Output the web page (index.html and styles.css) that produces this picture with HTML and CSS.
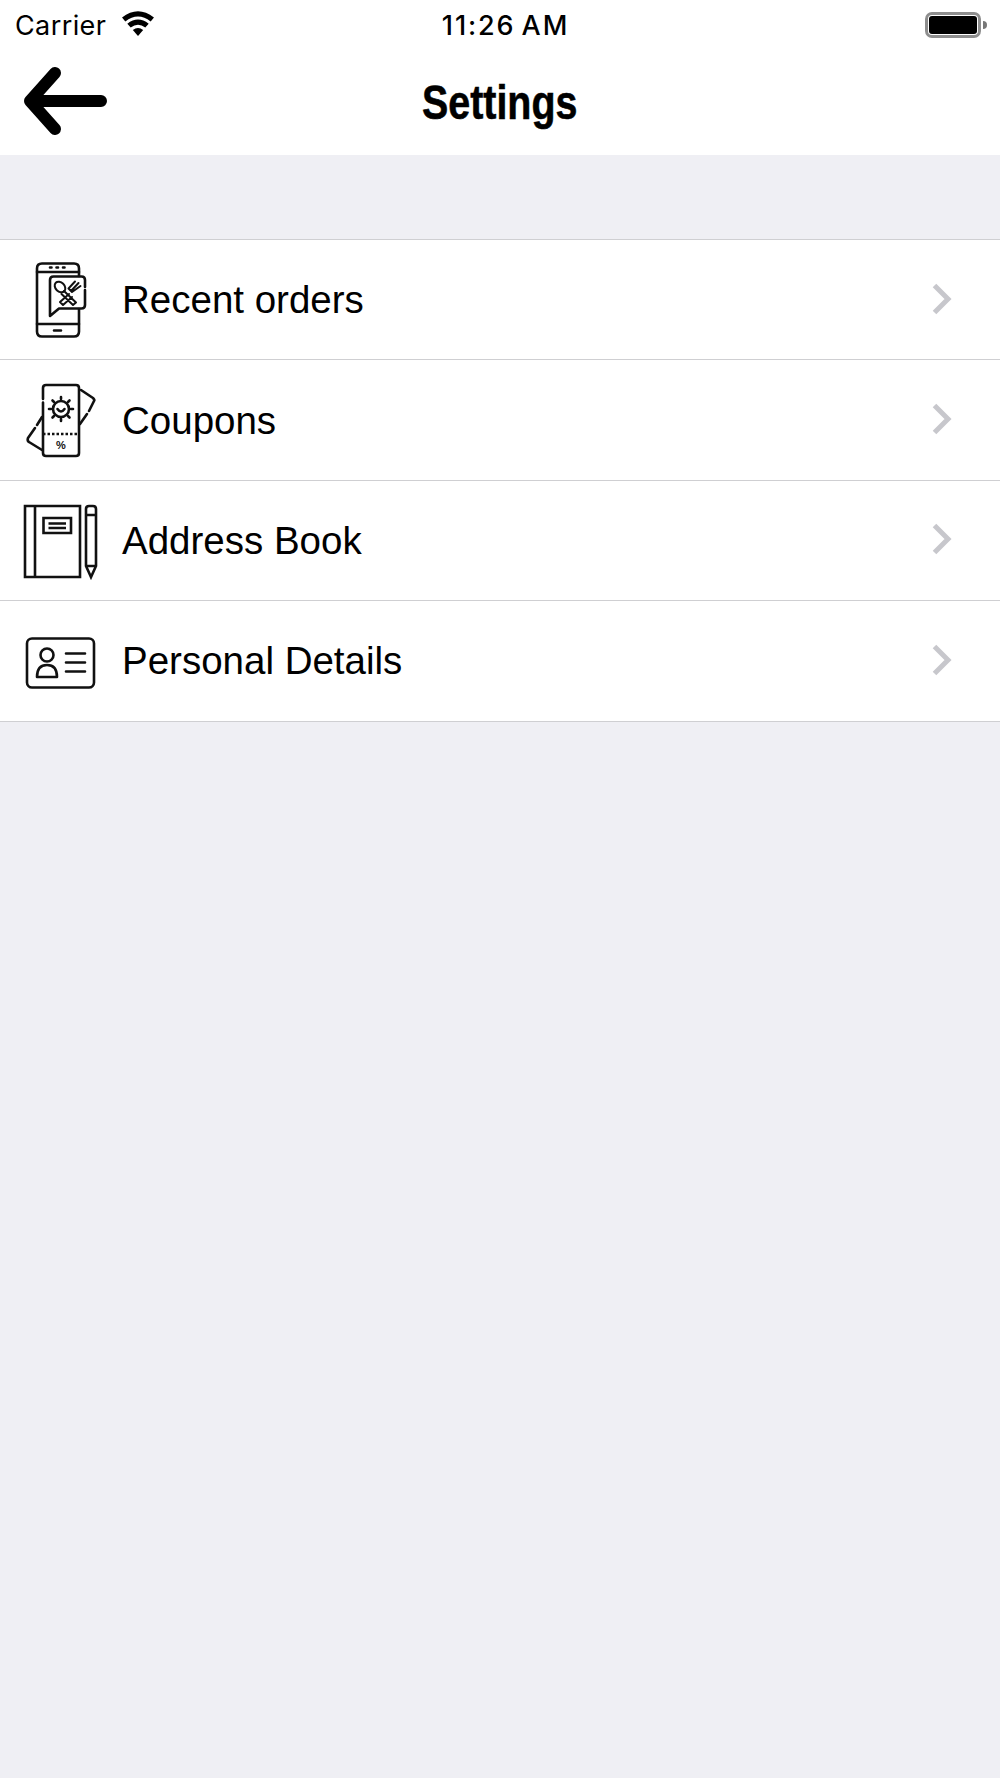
FILE: index.html
```html
<html>

<head>
	<title>Settings</title>
	<link rel="stylesheet" href="styles.css">
</head>

<body>
	<div class="status-bar">
		<div class="status-left">
			<span class="carrier">Carrier</span>
			<svg class="wifi" viewBox="0 0 34 26">
				<path d="M17 26 L11.6 19.8 Q17 15.6 22.4 19.8 Z" />
				<path d="M9.4 17.2 L5.9 13.2 Q17 4.6 28.1 13.2 L24.6 17.2 Q17 11.4 9.4 17.2 Z" />
				<path d="M3.8 10.8 L0.4 6.8 Q17 -6.4 33.6 6.8 L30.2 10.8 Q17 0.6 3.8 10.8 Z" />
			</svg>
		</div>
		<span class="time">11:26 AM</span>
		<div class="status-right">
			<div class="battery">
				<div class="battery-level"></div>
			</div>
			<div class="battery-cap"></div>
		</div>
	</div>

	<div class="nav-bar">
		<svg class="back" viewBox="0 0 84 68">
			<path d="M31 6 L6 34 L31 62 M6 34 L77 34" />
		</svg>
		<h1 class="title">Settings</h1>
	</div>

	<div class="menu">
		<div class="row">
			<svg class="row-icon" viewBox="0 0 100 100">
				<path d="M40 13.5 H32 Q27 13.5 27 18.5 V81.5 Q27 86.5 32 86.5 H64 Q69 86.5 69 81.5 V59 M69 26 V18.5 Q69 13.5 64 13.5 H40" />
				<path d="M27 22 H69 M27 74 H69 M44 80.5 H51" />
				<path d="M40 17.5 H41.5 M46.5 17.5 H48 M53 17.5 H54.5" />
				<path d="M75 37 V30 Q75 26.5 71.5 26.5 H43.5 Q40 26.5 40 30 V66 L49 58.5 H71.5 Q75 58.5 75 55 V40" />
				<g class="cutlery">
					<ellipse cx="50" cy="37" rx="4.5" ry="6" transform="rotate(-45 50 37)" />
					<path d="M54 41 L66 52.5 L63 55 L51.5 44 M68.5 33 L61 41 M65 31.5 L58.5 38.5 L62 42 L70.5 36 M59 44 L50 52 L53 55 L62 47" />
				</g>
			</svg>
			<span class="row-label">Recent orders</span>
			<svg class="chevron" viewBox="0 0 20 32"><path d="M2.5 2.5 L16 16 L2.5 29.5" /></svg>
		</div>
		<div class="row">
			<svg class="row-icon" viewBox="0 0 100 100">
				<path d="M33 29 V18 Q33 15 36 15 H66 Q69 15 69 18 V83 Q69 86 66 86 H36 Q33 86 33 83 V32.5" />
				<path class="dash" d="M33 64 H69" />
				<path d="M71 20 L83 28 Q85 30 84 31 L79 41 M77 44 L70 54 M32 47 L27 55 M25 58 L18 68 Q17 71 19 72 L32 80" />
				<circle cx="51" cy="39" r="8" />
				<path d="M47.5 39 Q51 44 54.5 39 M51 27 V29 M51 49 V51 M39 39 H41 M61 39 H63 M42.5 30.5 L44 32 M58 46 L59.5 47.5 M42.5 47.5 L44 46 M58 32 L59.5 30.5" />
				<text class="percent" x="51" y="79">%</text>
			</svg>
			<span class="row-label">Coupons</span>
			<svg class="chevron" viewBox="0 0 20 32"><path d="M2.5 2.5 L16 16 L2.5 29.5" /></svg>
		</div>
		<div class="row">
			<svg class="row-icon" viewBox="0 0 100 100">
				<path class="square" d="M15 16 H70 V87 H15 Z M25 16 V87 M33.5 28 H61 V43 H33.5 Z M38.5 33.5 H56 M38.5 38 H56" />
				<path class="square" d="M76 76 V19 Q76 16 79 16 H83 Q86 16 86 19 V76 L81 87 Z M76 25 H86 M76 76 H86" />
			</svg>
			<span class="row-label">Address Book</span>
			<svg class="chevron" viewBox="0 0 20 32"><path d="M2.5 2.5 L16 16 L2.5 29.5" /></svg>
		</div>
		<div class="row">
			<svg class="row-icon" viewBox="0 0 100 100">
				<rect x="17" y="27.5" width="67" height="49" rx="5" />
				<circle cx="37" cy="44" r="6.5" />
				<path d="M27 66 Q27 54 37 54 Q47 54 47 66 Z" />
				<path d="M56 42.5 H75 M56 51.5 H75 M56 60.5 H75" />
			</svg>
			<span class="row-label">Personal Details</span>
			<svg class="chevron" viewBox="0 0 20 32"><path d="M2.5 2.5 L16 16 L2.5 29.5" /></svg>
		</div>
	</div>
</body>

</html>
```

FILE: styles.css
```css
* {
	box-sizing: border-box;
	margin: 0;
	padding: 0;
}

html,
body {
	height: 100%;
}

body {
	background: #efeff4;
	font-family: "Liberation Sans", Arial, sans-serif;
	color: #000;
}

.status-bar {
	height: 50px;
	background: white;
	display: grid;
	grid-template-columns: 1fr auto 1fr;
	align-items: center;
	padding: 0 13px 0 15px;
	font-family: Inter, "Liberation Sans", sans-serif;
	font-size: 26px;
}

.status-left {
	display: flex;
	align-items: center;
	gap: 14px;
}

.carrier {
	font-size: 27px;
	letter-spacing: 0.4px;
}

.wifi {
	width: 36px;
	height: 25px;
	margin-top: -3px;
}

.time {
	font-weight: 500;
	font-size: 27px;
	letter-spacing: 1.9px;
	word-spacing: -3px;
	padding-left: 9px;
}

.status-right {
	display: flex;
	align-items: center;
	justify-content: flex-end;
	gap: 2px;
}

.battery {
	width: 56px;
	height: 26px;
	border: 3px solid #8e8e8e;
	border-radius: 7px;
	padding: 1px;
}

.battery-level {
	height: 100%;
	background: black;
	border-radius: 3px;
}

.battery-cap {
	width: 4px;
	height: 8px;
	background: #777;
	border-radius: 0 4px 4px 0;
}

.nav-bar {
	height: 105px;
	background: white;
	display: flex;
	align-items: center;
	justify-content: center;
	position: relative;
}

.back {
	position: absolute;
	left: 24px;
	top: 17px;
	width: 84px;
	height: 68px;
	fill: none;
	stroke: black;
	stroke-width: 12;
	stroke-linecap: round;
	stroke-linejoin: round;
}

.title {
	font-size: 48px;
	font-weight: bold;
	-webkit-text-stroke: 0.6px black;
	transform: scaleX(0.82);
}

.menu {
	margin-top: 84px;
	border-top: 1px solid #cfcfd2;
	background: white;
}

.row {
	height: 120.4px;
	display: flex;
	align-items: center;
	padding: 0 48px 0 10px;
	gap: 12px;
	border-bottom: 1px solid #cfcfd2;
}

.row-icon {
	width: 100px;
	height: 100px;
	fill: none;
	stroke: #111;
	stroke-width: 2.6;
	stroke-linecap: round;
	stroke-linejoin: round;
}

.row-icon .cutlery {
	stroke-width: 2;
}

.row-icon .square {
	stroke-linecap: butt;
	stroke-linejoin: miter;
}

.row-icon .dash {
	stroke-dasharray: 2.5 2;
	stroke-linecap: butt;
}

.row-icon .percent {
	fill: #111;
	stroke: none;
	font-family: "Liberation Sans", sans-serif;
	font-size: 11px;
	font-weight: bold;
	text-anchor: middle;
}

.row-label {
	flex: 1;
	font-size: 38.5px;
	padding-top: 1px;
}

.chevron {
	width: 20px;
	height: 32px;
	margin-top: -2px;
	fill: none;
	stroke: #c7c7cc;
	stroke-width: 5;
}
```
